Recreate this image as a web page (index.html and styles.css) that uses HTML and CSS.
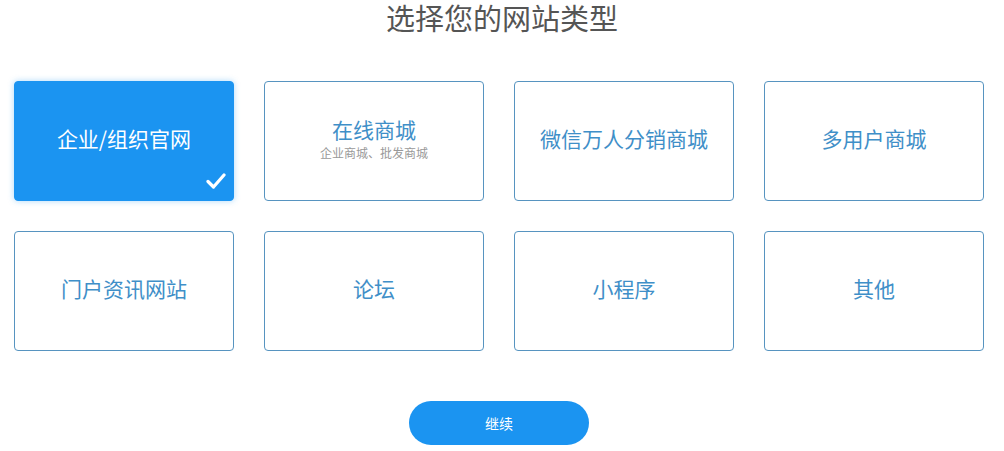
FILE: index.html
```html
<!DOCTYPE html>
<html lang="zh">
<head>
<meta charset="utf-8">
<link rel="stylesheet" href="styles.css">
</head>
<body>
<div class="page">
  <h1 class="title">选择您的网站类型</h1>
  <div class="grid">
    <div class="card selected">
      <span class="name">企业/组织官网</span>
      <svg class="check" viewBox="0 0 20 18" width="20" height="18"><path d="M2 9.5 L7.5 15 L18 3" fill="none" stroke="#fff" stroke-width="3.2" stroke-linecap="round" stroke-linejoin="round"/></svg>
    </div>
    <div class="card">
      <span class="name">在线商城</span>
      <span class="sub">企业商城、批发商城</span>
    </div>
    <div class="card"><span class="name">微信万人分销商城</span></div>
    <div class="card"><span class="name">多用户商城</span></div>
    <div class="card"><span class="name">门户资讯网站</span></div>
    <div class="card"><span class="name">论坛</span></div>
    <div class="card"><span class="name">小程序</span></div>
    <div class="card"><span class="name">其他</span></div>
  </div>
  <div class="actions">
    <button class="btn">继续</button>
  </div>
</div>
</body>
</html>
```

FILE: styles.css
```css
html, body {
  margin: 0;
  padding: 0;
  background: #fff;
}
body {
  font-family: "Noto Sans CJK SC", "Noto Sans", sans-serif;
  width: 1004px;
  height: 451px;
  overflow: hidden;
}
.page {
  display: flex;
  flex-direction: column;
  align-items: center;
}
.title {
  margin: 0;
  padding-top: 1px;
  font-size: 29px;
  line-height: 33px;
  font-weight: 400;
  color: #555;
  height: 33px;
}
.grid {
  display: grid;
  grid-template-columns: repeat(4, 220px);
  grid-auto-rows: 120px;
  gap: 30px;
  margin-top: 47px;
  margin-left: -6px;
}
.card {
  position: relative;
  box-sizing: border-box;
  border: 1px solid #5794c0;
  border-radius: 4px;
  background: #fff;
  display: flex;
  flex-direction: column;
  align-items: center;
  justify-content: center;
  padding-bottom: 6px;
}
.card .name {
  font-size: 21px;
  line-height: 26px;
  color: #3f8fc8;
}
.card .sub {
  font-size: 12px;
  line-height: 15px;
  color: #999;
  margin-top: 3px;
}
.card.selected {
  background: #1b94f1;
  border-color: #1b94f1;
  box-shadow: 0 0 6px rgba(27, 148, 241, 0.35);
}
.card.selected .name {
  color: #fff;
}
.check {
  position: absolute;
  right: 7px;
  bottom: 10px;
}
.actions {
  margin-top: 50px;
  margin-left: -6px;
}
.btn {
  width: 180px;
  height: 44px;
  border: none;
  border-radius: 22px;
  background: #1b94f1;
  color: #fff;
  font-family: "Noto Sans CJK SC", sans-serif;
  font-size: 14px;
}
```
